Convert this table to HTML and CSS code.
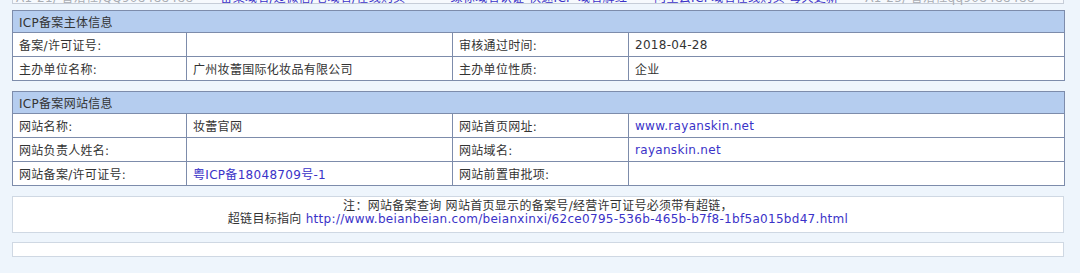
FILE: index.html
```html
<!DOCTYPE html>
<html lang="zh-CN">
<head>
<meta charset="utf-8">
<title>ICP备案信息</title>
<link rel="stylesheet" href="styles.css">
</head>
<body>
<div class="wrap">
  <div class="marquee">
    <div class="marquee-line">
      <span class="mq-gray">A1-21/ 智沿社,QQ908488488</span>
      <a class="mq-link" href="#">备案域名/过微信/老域名/在线购买</a>
      <a class="mq-link mq-far" href="#">绿标域名认证-快速ICP-域名解红</a>
      <a class="mq-link" href="#">阿里云ICP域名在线购买 每天更新</a>
      <span class="mq-gray">A1-25/ 智沿社qq908488488</span>
    </div>
  </div>

  <table class="info">
    <colgroup>
      <col class="c1"><col class="c2"><col class="c3"><col class="c4">
    </colgroup>
    <tr><th colspan="4">ICP备案主体信息</th></tr>
    <tr><td>备案/许可证号:</td><td></td><td>审核通过时间:</td><td>2018-04-28</td></tr>
    <tr><td>主办单位名称:</td><td>广州妆蕾国际化妆品有限公司</td><td>主办单位性质:</td><td>企业</td></tr>
  </table>

  <table class="info">
    <colgroup>
      <col class="c1"><col class="c2"><col class="c3"><col class="c4">
    </colgroup>
    <tr><th colspan="4">ICP备案网站信息</th></tr>
    <tr><td>网站名称:</td><td>妆蕾官网</td><td>网站首页网址:</td><td><a class="lnk" href="#">www.rayanskin.net</a></td></tr>
    <tr><td>网站负责人姓名:</td><td></td><td>网站域名:</td><td><a class="lnk" href="#">rayanskin.net</a></td></tr>
    <tr><td>网站备案/许可证号:</td><td><a class="lnk" href="#">粤ICP备18048709号-1</a></td><td>网站前置审批项:</td><td></td></tr>
  </table>

  <div class="note">
    <div>注：网站备案查询 网站首页显示的备案号/经营许可证号必须带有超链，</div>
    <div>超链目标指向 <a class="lnk" href="#">http://www.beianbeian.com/beianxinxi/62ce0795-536b-465b-b7f8-1bf5a015bd47.html</a></div>
  </div>

  <div class="empty"></div>
</div>
</body>
</html>
```

FILE: styles.css
```css
html, body {
  margin: 0;
  padding: 0;
}
body {
  background: #eef5fc;
  font-family: "DejaVu Sans", "Noto Sans CJK SC", sans-serif;
  font-size: 12px;
  letter-spacing: 0.3px;
  color: #333;
}
a {
  text-decoration: none;
}
.wrap {
  width: 1052px;
  padding-left: 12px;
}
.marquee {
  display: flow-root;
  height: 3px;
  border: 1px solid #c6cdd8;
  border-top: none;
  background: #f6f9fd;
}
.marquee-line {
  margin-top: -9px;
  line-height: 14px;
  white-space: nowrap;
  padding-left: 3px;
  display: flex;
  gap: 27px;
}
.mq-gray {
  color: #a9adb3;
}
.mq-link {
  color: #3a32c8;
}
.mq-far {
  margin-left: 18px;
}
.info {
  width: 1052px;
  border-collapse: collapse;
  border: 1px solid #7d8cab;
  margin-top: 6px;
  table-layout: fixed;
}
.info + .info {
  margin-top: 10px;
}
.c1 { width: 174px; }
.c2 { width: 266px; }
.c3 { width: 176px; }
.c4 { width: 436px; }
.info th {
  background: #b5cdef;
  text-align: left;
  font-weight: normal;
  height: 21px;
  padding: 0 6px;
  border: 1px solid #7d8cab;
}
.info td {
  background: #fff;
  height: 23px;
  padding: 0 6px;
  border: 1px solid #7d8cab;
  white-space: nowrap;
}
.lnk {
  color: #3a32c8;
}
.note {
  margin-top: 10px;
  border: 1px solid #cfd8e3;
  background: #fff;
  text-align: center;
  line-height: 13px;
  padding: 3px 0 6px;
}
.empty {
  margin-top: 9px;
  height: 13px;
  border: 1px solid #cfd8e3;
  background: #fff;
}
```
